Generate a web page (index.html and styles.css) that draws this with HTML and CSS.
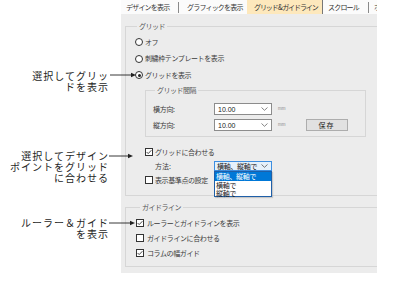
FILE: index.html
```html
<!DOCTYPE html>
<html lang="ja">
<head>
<meta charset="utf-8">
<link rel="stylesheet" href="styles.css">
</head>
<body>
<div class="page">
  <div class="dialog">
    <div class="tabs">
      <span class="tab t1">デザインを表示</span>
      <span class="sep"></span>
      <span class="tab t2">グラフィックを表示</span>
      <span class="tab t3 active">グリッド &amp; ガイドライン</span>
      <span class="tab t4">スクロール</span>
      <span class="sep"></span>
      <span class="tab t5">ホ</span>
    </div>
    <div class="body">
      <fieldset class="group grid">
        <legend>グリッド</legend>
        <div class="radio-row"><span class="radio"></span>オフ</div>
        <div class="radio-row"><span class="radio"></span>刺繍枠テンプレートを表示</div>
        <div class="radio-row"><span class="radio on"></span>グリッドを表示</div>
        <fieldset class="group inner">
          <legend>グリッド間隔</legend>
          <div class="field-row">
            <span class="flabel">横方向:</span>
            <span class="input">10.00<svg class="chev" viewBox="0 0 7 4" width="7" height="4"><polyline points="0.5,0.5 3.5,3.3 6.5,0.5" fill="none" stroke="#666" stroke-width="0.8"/></svg></span>
            <span class="unit">mm</span>
          </div>
          <div class="field-row">
            <span class="flabel">縦方向:</span>
            <span class="input">10.00<svg class="chev" viewBox="0 0 7 4" width="7" height="4"><polyline points="0.5,0.5 3.5,3.3 6.5,0.5" fill="none" stroke="#666" stroke-width="0.8"/></svg></span>
            <span class="unit">mm</span>
            <span class="btn">保存</span>
          </div>
        </fieldset>
        <div class="check-row snap first"><span class="cb"><svg viewBox="0 0 8 8" width="8" height="8"><polyline points="1.6,4 3.2,5.6 6.4,2.2" fill="none" stroke="#333" stroke-width="0.9"/></svg></span>グリッドに合わせる</div>
        <div class="method-row">
          <span class="mlabel">方法:</span>
          <span class="combo">横軸、縦軸で<svg class="chev" viewBox="0 0 7 4" width="7" height="4"><polyline points="0.5,0.5 3.5,3.3 6.5,0.5" fill="none" stroke="#555" stroke-width="0.8"/></svg></span>
          <div class="droplist">
            <div class="item sel">横軸、縦軸で</div>
            <div class="item">横軸で</div>
            <div class="item">縦軸で</div>
          </div>
        </div>
        <div class="check-row snap"><span class="cb"></span>表示基準点の設定</div>
      </fieldset>
      <fieldset class="group guide">
        <legend>ガイドライン</legend>
        <div class="check-row g"><span class="cb"><svg viewBox="0 0 8 8" width="8" height="8"><polyline points="1.6,4 3.2,5.6 6.4,2.2" fill="none" stroke="#333" stroke-width="0.9"/></svg></span>ルーラーとガイドラインを表示</div>
        <div class="check-row g"><span class="cb"></span>ガイドラインに合わせる</div>
        <div class="check-row g"><span class="cb"><svg viewBox="0 0 8 8" width="8" height="8"><polyline points="1.6,4 3.2,5.6 6.4,2.2" fill="none" stroke="#333" stroke-width="0.9"/></svg></span>コラムの幅ガイド</div>
      </fieldset>
    </div>
  </div>

  <div class="note n1"><div>選択してグリッ</div><div>ドを表示</div></div>
  <div class="note n2"><div>選択してデザイン</div><div>ポイントをグリッド</div><div>に合わせる</div></div>
  <div class="note n3"><div>ルーラー＆ガイド</div><div>を表示</div></div>

  <svg class="arrow a1" width="28" height="6" viewBox="0 0 28 6"><line x1="0" y1="3" x2="23" y2="3" stroke="#222" stroke-width="0.9"/><polygon points="21,0.8 26,3 21,5.2" fill="#222"/></svg>
  <svg class="arrow a2" width="28" height="6" viewBox="0 0 28 6"><line x1="0" y1="3" x2="21" y2="3" stroke="#222" stroke-width="0.9"/><polygon points="19,0.8 24,3 19,5.2" fill="#222"/></svg>
  <svg class="arrow a3" width="28" height="6" viewBox="0 0 28 6"><line x1="0" y1="3" x2="23" y2="3" stroke="#222" stroke-width="0.9"/><polygon points="21,0.8 26,3 21,5.2" fill="#222"/></svg>
</div>
</body>
</html>
```

FILE: styles.css
```css
* { box-sizing: border-box; }
html, body {
  margin: 0;
  padding: 0;
  background: #ffffff;
}
body {
  font-family: "Noto Sans CJK JP", "Noto Sans", sans-serif;
  color: #3a3a3a;
}
.page {
  position: relative;
  width: 412px;
  height: 290px;
  overflow: hidden;
}

/* dialog */
.dialog {
  margin-left: 121px;
  width: 256px;
  height: 273px;
  background: #ececec;
  overflow: hidden;
  font-size: 7px;
  line-height: 1;
}
.tabs {
  display: flex;
  align-items: center;
  height: 14px;
  background: #fbfbfb;
  white-space: nowrap;
  overflow: hidden;
}
.tab {
  flex: none;
  height: 14px;
  display: flex;
  align-items: center;
  letter-spacing: -0.8px;
  color: #333;
}
.t1 { width: 57px; padding-left: 5px; }
.t2 { width: 68px; padding-left: 8px; }
.t3 { width: 76px; padding-left: 7px; letter-spacing: -1.1px; }
.t3.active { background: #fde8bc; border-right: 1px solid #777; }
.t4 { width: 45px; padding-left: 5px; }
.t5 { width: 8px; padding-left: 5px; overflow: hidden; }
.sep {
  flex: none;
  width: 1px;
  height: 11px;
  background: #8a8a8a;
}

.body {
  height: 259px;
}
.group {
  border: 1px solid #d6d6d6;
  min-width: 0;
}
.group legend {
  font-size: 7px;
  line-height: 9px;
  padding: 0 2px;
  color: #555;
  letter-spacing: -0.5px;
}
.grid {
  margin: 8px -6px 0 4px;
  padding: 3px 0 8px 8px;
}
.grid > legend { margin-left: 3px; }
.radio-row {
  display: flex;
  align-items: center;
  height: 16.5px;
  letter-spacing: -0.4px;
}
.radio {
  flex: none;
  width: 8px;
  height: 8px;
  margin: 0 2px 0 1px;
  border: 1px solid #333;
  border-radius: 50%;
  background: #fff;
  position: relative;
}
.radio.on::after {
  content: "";
  position: absolute;
  left: 1.5px;
  top: 1.5px;
  width: 3px;
  height: 3px;
  border-radius: 50%;
  background: #222;
}

.inner {
  width: 221px;
  margin: 2.5px 0 0 11px;
  padding: 6px 0 3px 7px;
}
.inner > legend { margin-left: 2px; }
.field-row {
  display: flex;
  align-items: center;
  height: 16px;
}
.flabel {
  width: 61px;
  letter-spacing: -0.3px;
}
.input {
  display: flex;
  align-items: center;
  justify-content: space-between;
  width: 58px;
  height: 12px;
  padding: 0 3px 0 3px;
  background: #fff;
  border: 1px solid #8c8c8c;
  color: #222;
  font-family: "Liberation Sans", "Noto Sans", sans-serif;
}
.unit {
  margin-left: 6px;
  font-size: 4.5px;
  color: #8a8a8a;
  font-family: "Liberation Sans", sans-serif;
}
.btn {
  margin-left: 20px;
  width: 42px;
  height: 12px;
  display: flex;
  align-items: center;
  justify-content: center;
  background: #e1e1e1;
  border: 1px solid #adadad;
  color: #222;
  letter-spacing: 1px;
}

.check-row {
  display: flex;
  align-items: center;
  height: 14px;
  letter-spacing: -0.4px;
}
.snap { margin-left: 11px; }
.snap.first { margin-top: 8px; }
.cb {
  flex: none;
  width: 8px;
  height: 8px;
  margin-right: 2px;
  border: 1px solid #333;
  background: #fff;
  position: relative;
}
.cb svg {
  position: absolute;
  left: -1px;
  top: -1px;
}
.method-row {
  position: relative;
  display: flex;
  align-items: center;
  height: 14px;
  padding-left: 21px;
}
.mlabel { width: 59px; }
.combo {
  display: flex;
  align-items: center;
  justify-content: space-between;
  width: 58px;
  height: 10px;
  padding: 0 3px 0 2px;
  background: #e5f1fb;
  border: 1px solid #3d8ee0;
  color: #222;
  letter-spacing: -0.3px;
}
.droplist {
  position: absolute;
  left: 80px;
  top: 12px;
  width: 58px;
  height: 26px;
  background: #fff;
  border: 1px solid #1f5fa8;
  z-index: 2;
  box-shadow: 1px 1px 1px rgba(0,0,0,0.15);
}
.item {
  height: 8px;
  line-height: 8px;
  padding-left: 1px;
  color: #222;
  letter-spacing: -0.3px;
}
.item.sel {
  height: 9px;
  line-height: 9px;
  background: #0078d7;
  color: #fff;
}

.guide {
  margin: 7px -6px 0 4px;
  padding: 3.5px 0 5px 10px;
}
.guide > legend { margin-left: 4px; }
.check-row.g {
  height: 15px;
}
.check-row.g .cb { margin-right: 3px; }

/* annotations */
.note {
  position: absolute;
  right: 303px;
  font-size: 10px;
  line-height: 11px;
  letter-spacing: 1px;
  text-align: right;
  color: #1e1e1e;
  white-space: nowrap;
}
.note div { height: 11px; }
.n1 { top: 69.5px; }
.n2 { top: 149.5px; }
.n3 { top: 216.5px; }
.arrow { position: absolute; }
.a1 { left: 110px; top: 72px; }
.a2 { left: 109px; top: 153px; }
.a3 { left: 109px; top: 220px; }
```
